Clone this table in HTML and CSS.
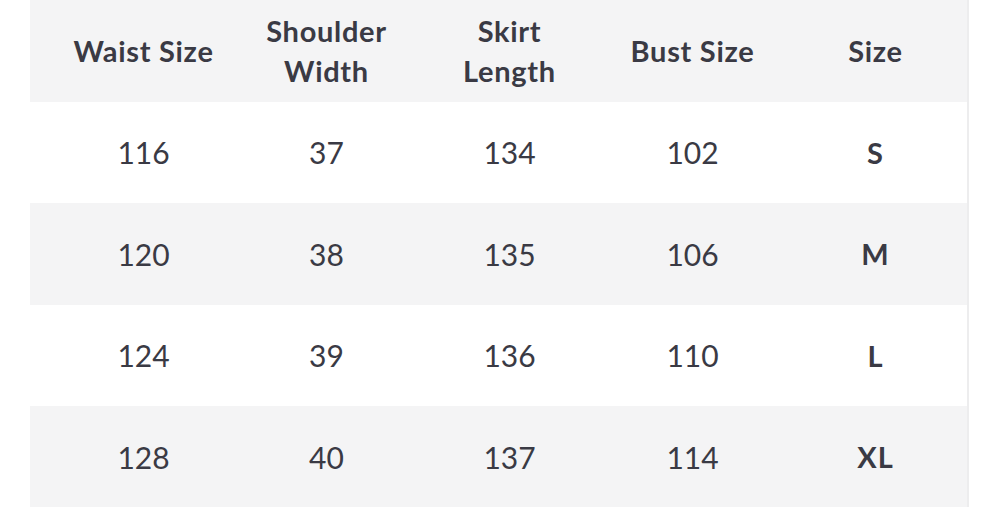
FILE: index.html
```html
<!DOCTYPE html>
<html>
<head>
<meta charset="utf-8">
<link rel="stylesheet" href="styles.css">
</head>
<body>
<div class="page">
  <div class="table">
    <div class="row head">
      <div class="cell">Waist Size</div>
      <div class="cell">Shoulder<br>Width</div>
      <div class="cell">Skirt<br>Length</div>
      <div class="cell">Bust Size</div>
      <div class="cell">Size</div>
    </div>
    <div class="row">
      <div class="cell">116</div><div class="cell">37</div><div class="cell">134</div><div class="cell">102</div><div class="cell b">S</div>
    </div>
    <div class="row alt">
      <div class="cell">120</div><div class="cell">38</div><div class="cell">135</div><div class="cell">106</div><div class="cell b">M</div>
    </div>
    <div class="row">
      <div class="cell">124</div><div class="cell">39</div><div class="cell">136</div><div class="cell">110</div><div class="cell b">L</div>
    </div>
    <div class="row alt">
      <div class="cell">128</div><div class="cell">40</div><div class="cell">137</div><div class="cell">114</div><div class="cell b">XL</div>
    </div>
  </div>
</div>
</body>
</html>
```

FILE: styles.css
```css
html, body {
  margin: 0;
  padding: 0;
  background: #ffffff;
}
body {
  font-family: Lato, "Open Sans", sans-serif;
  color: #3a3a44;
  width: 1000px;
  height: 507px;
  overflow: hidden;
}
.page {
  display: flex;
  padding-left: 30px;
}
.table {
  width: 937px;
  border-right: 2px solid #ededee;
  display: flex;
  flex-direction: column;
}
.row {
  display: grid;
  grid-template-columns: repeat(5, 183px);
  padding-left: 22px;
  height: 101.5px;
  align-items: center;
  font-size: 30px;
}
.head, .alt {
  background: #f4f4f5;
}
.head .cell {
  font-weight: 700;
  font-size: 29px;
  line-height: 40px;
  letter-spacing: 0.7px;
}
.cell {
  text-align: center;
}
.b {
  font-weight: 700;
  font-size: 29px;
  letter-spacing: 1px;
}
```
